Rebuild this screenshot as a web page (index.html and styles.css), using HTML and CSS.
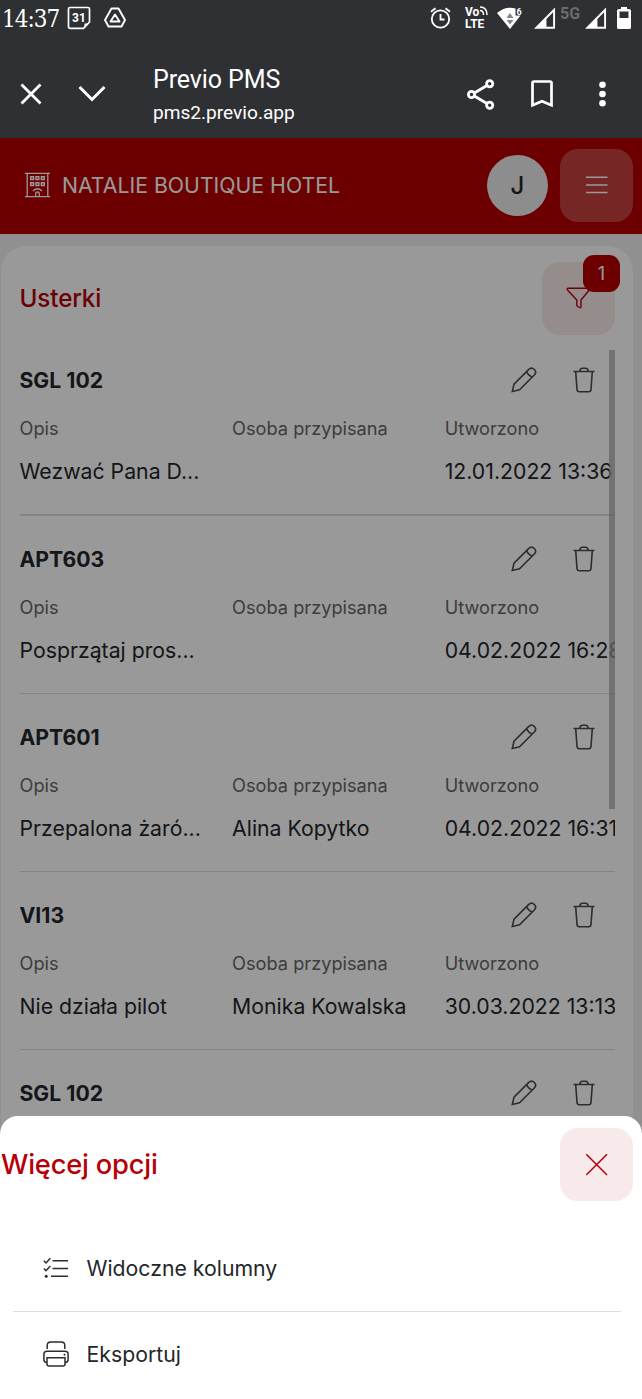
FILE: index.html
```html
<!DOCTYPE html>
<html lang="pl">
<head>
    <meta charset="UTF-8">
    <meta name="viewport" content="width=device-width, initial-scale=1.0">
    <title>Previo PMS</title>
    <link rel="stylesheet" href="styles.css">
</head>
<body>
    <!-- shared icons -->
    <svg class="icon-defs">
        <symbol id="pencil" viewBox="0 0 26 26">
            <path d="M1.3 24.5 3 17.2 17.8 2.4Q20.5-.2 23.4 2.5 26 5.300 23.300 8L8.500 22.700ZM15.700 4.500Q17 8.500 21.300 10" fill="none"/>
        </symbol>
        <symbol id="trash" viewBox="0 0 22 26">
            <path d="M.5 4.500H21.500M6.800 4.300Q7 1.200 9.500 1.200H12.500Q15 1.200 15.200 4.300M2.700 4.500 4 22.500Q4.200 24.700 6.200 24.700H15.800Q17.800 24.700 18 22.500L19.300 4.500" fill="none"/>
        </symbol>
        <symbol id="signal" viewBox="0 0 23 23">
            <path d="M0 22.300 22 0V22.300ZM13 12V20H20V5Z" fill="#fff" fill-rule="evenodd"/>
        </symbol>
    </svg>

    <div class="screen">
        <div class="status-bar">
            <span class="clock">14:37</span>
            <svg class="calendar-icon" width="24" height="24" viewBox="0 0 24 24">
                <path d="M3 1.500H21Q22.500 1.500 22.500 3V16L16.500 22.300H3Q1.500 22.300 1.500 20.800V3Q1.500 1.500 3 1.500Z" fill="none" stroke="#fff" stroke-width="1.700"/>
                <path d="M17.500 22V17.500H22Z" fill="#fff"/>
                <text x="12" y="15.500" class="calendar-day">31</text>
            </svg>
            <svg width="22" height="22" viewBox="0 0 22 22" fill="none" stroke="#fff" stroke-width="1.900" stroke-linejoin="round">
                <path d="M7.500 1.500H14.500L21 13 17.500 19.500H4.500L1 13Z"/>
                <path d="M11 7.500 15.500 14.500H6.500Z"/>
            </svg>
            <div class="status-icons">
                <svg class="alarm-icon" width="21" height="22" viewBox="0 0 21 22" fill="none" stroke="#fff" stroke-width="1.800">
                    <circle cx="10.500" cy="12" r="8.700"/>
                    <path d="M10.500 7V12.500H14.500M1 4.800 5.500 1.200M20 4.800 15.500 1.200"/>
                </svg>
                <div class="volte">
                    <span>Vo<svg width="9" height="9" viewBox="0 0 9 9" fill="none" stroke="#fff" stroke-width="1.500"><path d="M1 1Q8 1 8 9M1 4.500Q4.500 4.500 4.500 9"/></svg></span>
                    <span>LTE</span>
                </div>
                <svg class="wifi-icon" width="26" height="23" viewBox="0 0 26 23">
                    <path d="M0 6Q9-1.500 18.500 1.500V8.500H23.500L13 22Z" fill="#fff"/>
                    <path d="M9.500 11 13 6 16.500 11ZM9.500 13H16.500L13 17.500Z" fill="#858585"/>
                    <text x="19.500" y="7.500" class="wifi-six">6</text>
                </svg>
                <svg class="signal-one" width="22" height="23"><use href="#signal"/></svg>
                <span class="network">5G</span>
                <svg class="signal-two" width="22" height="23"><use href="#signal"/></svg>
                <svg width="14" height="23" viewBox="0 0 14 23">
                    <path d="M4 0H10V2H12Q14 2 14 4V20.500Q14 22 12.500 22H1.500Q0 22 0 20.500V4Q0 2 2 2H4ZM2.500 4.500V11H11.500V4.500Z" fill="#fff" fill-rule="evenodd"/>
                </svg>
            </div>
        </div>

        <div class="browser-bar">
            <svg width="22" height="22" viewBox="0 0 22 22" fill="none" stroke="#fff" stroke-width="2.800"><path d="M1.500 1.500 20.500 20.500M20.500 1.500 1.500 20.500"/></svg>
            <svg class="chevron" width="28" height="18" viewBox="0 0 28 18" fill="none" stroke="#fff" stroke-width="3"><path d="M1.500 2 14 14.500 26.500 2"/></svg>
            <div class="page-info">
                <div class="page-title">Previo PMS</div>
                <div class="page-url">pms2.previo.app</div>
            </div>
            <svg width="28" height="31" viewBox="0 0 28 31" fill="none" stroke="#fff" stroke-width="2.800">
                <circle cx="4.500" cy="15.500" r="3.100"/><circle cx="22.700" cy="4.800" r="3.100"/><circle cx="22.700" cy="26.200" r="3.100"/>
                <path d="M7.300 14 20 6.500M7.300 17 20 24.500"/>
            </svg>
            <svg class="bookmark" width="22" height="28" viewBox="0 0 22 28" fill="none" stroke="#fff" stroke-width="2.700"><path d="M1.500 25.300V3Q1.500 1.500 3 1.500H19Q20.500 1.500 20.500 3V25.300L11 21.200Z"/></svg>
            <svg class="dots" width="8" height="26" viewBox="0 0 8 26" fill="#fff"><circle cx="3.500" cy="3.700" r="3.300"/><circle cx="3.500" cy="13" r="3.300"/><circle cx="3.500" cy="22.300" r="3.300"/></svg>
        </div>

        <div class="app">
            <header class="app-header">
                <svg width="25" height="26" viewBox="0 0 25 26" fill="none" stroke="#fff" stroke-width="1.300">
                    <path d="M0 1.300H25M0 24.700H25M2.200 1.300V24.700M22.800 1.300V24.700"/>
                    <path d="M5.700 4.700H8.500V7.500H5.700ZM11 4.700H13.800V7.500H11ZM16.400 4.700H19.200V7.500H16.400ZM5.700 10.700H8.500V13.500H5.700ZM11 10.700H13.800V13.500H11ZM16.400 10.700H19.200V13.500H16.400Z" stroke-width="1.500"/>
                    <path d="M8 19Q12.500 14.500 17 19M10.700 24.500V21.500Q10.700 20 12.500 20T14.300 21.500V24.500"/>
                </svg>
                <span class="hotel-name">NATALIE BOUTIQUE HOTEL</span>
                <div class="avatar">J</div>
                <div class="menu-button">
                    <svg width="22" height="18" viewBox="0 0 22 18" stroke="#fff" stroke-width="1.600"><path d="M0 1.200H21.500M0 9H21.500M0 16.500H21.500"/></svg>
                </div>
            </header>

            <main class="card">
                <div class="card-header">
                    <h1>Usterki</h1>
                    <div class="filter-button">
                        <svg width="25" height="23" viewBox="0 0 25 23" fill="none" stroke="#b50010" stroke-width="1.400" stroke-linejoin="round"><path d="M2 1.200H23Q24.300 1.500 23.300 3L15 13V19.500Q15 22 10.800 18.800V13L1.500 3Q.7 1.500 2 1.200Z"/></svg>
                        <span class="badge">1</span>
                    </div>
                </div>
                <div class="list">
                    <div class="item">
                        <div class="item-header"><h2>SGL 102</h2><svg class="edit"><use href="#pencil"/></svg><svg class="delete"><use href="#trash"/></svg></div>
                        <div class="fields labels"><span>Opis</span><span>Osoba przypisana</span><span>Utworzono</span></div>
                        <div class="fields values"><span>Wezwać Pana D...</span><span></span><span>12.01.2022 13:36</span></div>
                    </div>
                    <div class="item">
                        <div class="item-header"><h2>APT603</h2><svg class="edit"><use href="#pencil"/></svg><svg class="delete"><use href="#trash"/></svg></div>
                        <div class="fields labels"><span>Opis</span><span>Osoba przypisana</span><span>Utworzono</span></div>
                        <div class="fields values"><span>Posprzątaj pros...</span><span></span><span>04.02.2022 16:28</span></div>
                    </div>
                    <div class="item">
                        <div class="item-header"><h2>APT601</h2><svg class="edit"><use href="#pencil"/></svg><svg class="delete"><use href="#trash"/></svg></div>
                        <div class="fields labels"><span>Opis</span><span>Osoba przypisana</span><span>Utworzono</span></div>
                        <div class="fields values"><span>Przepalona żaró...</span><span>Alina Kopytko</span><span>04.02.2022 16:31</span></div>
                    </div>
                    <div class="item">
                        <div class="item-header"><h2>VI13</h2><svg class="edit"><use href="#pencil"/></svg><svg class="delete"><use href="#trash"/></svg></div>
                        <div class="fields labels"><span>Opis</span><span>Osoba przypisana</span><span>Utworzono</span></div>
                        <div class="fields values"><span>Nie działa pilot</span><span>Monika Kowalska</span><span>30.03.2022 13:13</span></div>
                    </div>
                    <div class="item">
                        <div class="item-header"><h2>SGL 102</h2><svg class="edit"><use href="#pencil"/></svg><svg class="delete"><use href="#trash"/></svg></div>
                    </div>
                    <div class="scrollbar"></div>
                </div>
            </main>

            <div class="overlay"></div>

            <section class="sheet">
                <div class="sheet-header">
                    <h2>Więcej opcji</h2>
                    <div class="close-button">
                        <svg width="22" height="22" viewBox="0 0 22 22" stroke="#b50008" stroke-width="1.500"><path d="M.2.2 21 21M21 .2.2 21"/></svg>
                    </div>
                </div>
                <div class="option">
                    <svg width="26" height="22" viewBox="0 0 26 22" fill="none" stroke="#2b2d31" stroke-width="1.500">
                        <path d="M9.500 3.700H25M9.500 11.500H25M8 19.300H25M.8 3.800 3 6 7.300 1.200M.8 11.500 3 13.700 7.300 8.900"/>
                        <circle cx="3.200" cy="19.200" r="1.500" fill="#2b2d31" stroke="none"/>
                    </svg>
                    <span>Widoczne kolumny</span>
                </div>
                <div class="option">
                    <svg width="26" height="26" viewBox="0 0 26 26" fill="none" stroke="#2b2d31" stroke-width="1.500">
                        <path d="M4.200 8V4.500Q4.200 1 7.700 1H18.300Q21.800 1 21.800 4.500V8M4 21.500Q.9 21.500.9 18.500V13Q.9 10.200 4 10.200H22Q25.100 10.200 25.100 13V18.500Q25.100 21.500 22 21.500"/>
                        <path d="M4 16.700H22V23Q22 25 20 25H6Q4 25 4 23Z"/>
                        <circle cx="21.500" cy="13.700" r="1" fill="#2b2d31" stroke="none"/>
                    </svg>
                    <span>Eksportuj</span>
                </div>
            </section>
        </div>
    </div>
</body>
</html>
```
FILE: styles.css
```css
* {
    box-sizing: border-box;
}
body {
    margin: 0;
    font-family: Inter, "Liberation Sans", sans-serif;
    font-size: 21.250px;
    color: #24262a;
}
h1, h2 {
    margin: 0;
}
svg {
    display: block;
    flex-shrink: 0;
}
.icon-defs {
    width: 0;
    height: 0;
    position: absolute;
}
.screen {
    display: flex;
    flex-direction: column;
    height: 1399px;
    overflow: hidden;
}

/* Android status bar */
.status-bar {
    display: flex;
    align-items: center;
    height: 36px;
    padding: 0 11px 0 2px;
    background: #2f3033;
    color: #fff;
}
.clock {
    width: 65px;
    padding-top: 2px;
    font-family: "DejaVu Serif Condensed", "DejaVu Serif", serif;
    font-stretch: condensed;
    font-size: 24px;
    letter-spacing: -1px;
}
.calendar-icon {
    margin-right: 13px;
}
.calendar-day {
    font: bold 12px Roboto, sans-serif;
    fill: #fff;
    text-anchor: middle;
}
.status-icons {
    display: flex;
    align-items: center;
    margin-left: auto;
}
.alarm-icon {
    margin-right: 14px;
}
.volte {
    width: 32px;
    font: bold 12px/12px Roboto, sans-serif;
}
.volte span {
    display: flex;
}
.wifi-icon {
    margin-right: 11px;
}
.wifi-six {
    font: bold 9px Roboto, sans-serif;
    fill: #fff;
}
.network {
    align-self: flex-start;
    width: 29px;
    padding-left: 4px;
    margin-top: -2px;
    font: bold 16px/20px Roboto, sans-serif;
    color: #6b6c6e;
}
.signal-two {
    margin-right: 10px;
}

/* Browser toolbar */
.browser-bar {
    display: flex;
    align-items: center;
    height: 102px;
    padding: 14px 35px 0 20px;
    background: #2f3033;
    color: #fff;
}
.chevron {
    margin: 0 47px 0 36px;
}
.page-info {
    flex: 1;
    padding-top: 5px;
    font-family: Roboto, sans-serif;
}
.page-title {
    font-size: 25px;
    line-height: 32px;
    letter-spacing: -.100px;
}
.page-url {
    font-size: 19.100px;
    line-height: 33px;
}
.bookmark {
    margin: 0 46px 0 36px;
}

/* Application */
.app {
    position: relative;
    flex: 1;
    min-height: 0;
    overflow: hidden;
    background: #f1f1f1;
}
.app-header {
    display: flex;
    align-items: center;
    height: 96px;
    padding: 0 9px 2px 25px;
    background: #b50000;
    color: #fff;
}
.hotel-name {
    flex: 1;
    margin-left: 12px;
}
.avatar {
    display: flex;
    align-items: center;
    justify-content: center;
    width: 61px;
    height: 61px;
    margin-right: 12px;
    border-radius: 50%;
    background: #ececec;
    color: #24262a;
    font-size: 24px;
    font-weight: 500;
}
.menu-button,
.filter-button,
.close-button {
    display: flex;
    align-items: center;
    justify-content: center;
    width: 73px;
    height: 73px;
    border-radius: 18px;
}
.menu-button {
    background: rgba(255, 255, 255, .25);
}
.card {
    height: 1000px;
    margin: 12px 9px 0 1px;
    padding: 15px 18px 0 18.500px;
    border-radius: 25px;
    background: #fff;
}
.card-header {
    display: flex;
    align-items: center;
    justify-content: space-between;
    height: 76px;
    padding-bottom: 2px;
}
.card-header h1 {
    font-size: 24.2px;
    font-weight: 500;
    letter-spacing: -.100px;
    color: #b50008;
}
.filter-button {
    position: relative;
    background: #f8e9ea;
}
.badge {
    position: absolute;
    top: -7px;
    right: -5px;
    display: flex;
    align-items: center;
    justify-content: center;
    width: 37px;
    height: 37px;
    border-radius: 11px;
    background: #b50000;
    color: #fff;
    font-size: 18px;
}
.list {
    position: relative;
    overflow: hidden;
}
.item {
    height: 178.100px;
    border-bottom: 1px solid #dcdcdc;
    padding-top: 25px;
}
.item:first-child {
    height: 178.500px;
    border-bottom-width: 2px;
}
.item-header {
    display: flex;
    align-items: center;
    height: 36px;
    padding-right: 20px;
}
.item-header h2 {
    flex: 1;
    font-size: 21.2px;
    font-weight: 700;
}
.item-header svg {
    stroke: #4b4b4b;
    stroke-width: 1.600;
}
.edit {
    width: 26px;
    height: 26px;
    margin-right: 36px;
}
.delete {
    width: 22px;
    height: 26px;
}
.fields {
    display: grid;
    grid-template-columns: 212.600px 212.600px 212.600px;
    white-space: nowrap;
}
.labels {
    margin-top: 18px;
    font-size: 18.200px;
    line-height: 24px;
    color: #666;
}
.values {
    margin-top: 17px;
    line-height: 28px;
}
.scrollbar {
    position: absolute;
    top: 13px;
    right: 0;
    width: 6px;
    height: 459px;
    background: rgba(170, 170, 170, .75);
}
.overlay {
    position: absolute;
    inset: 0;
    background: rgba(0, 0, 0, .4);
}

/* Bottom sheet */
.sheet {
    position: absolute;
    left: 0;
    right: 0;
    bottom: 0;
    height: 283px;
    padding: 12px 9px 0 1px;
    border-radius: 18px 18px 0 0;
    background: #fff;
}
.sheet-header {
    display: flex;
    align-items: center;
    justify-content: space-between;
    margin-bottom: 24px;
}
.sheet-header h2 {
    font-size: 27.300px;
    font-weight: 500;
    letter-spacing: -.200px;
    color: #b50008;
}
.close-button {
    background: #f8e9ea;
}
.option {
    display: flex;
    align-items: center;
    gap: 17.500px;
    height: 86px;
    margin: 0 12px;
    padding-left: 30px;
}
.option + .option {
    height: 85px;
    border-top: 1px solid #ddd;
}
```
